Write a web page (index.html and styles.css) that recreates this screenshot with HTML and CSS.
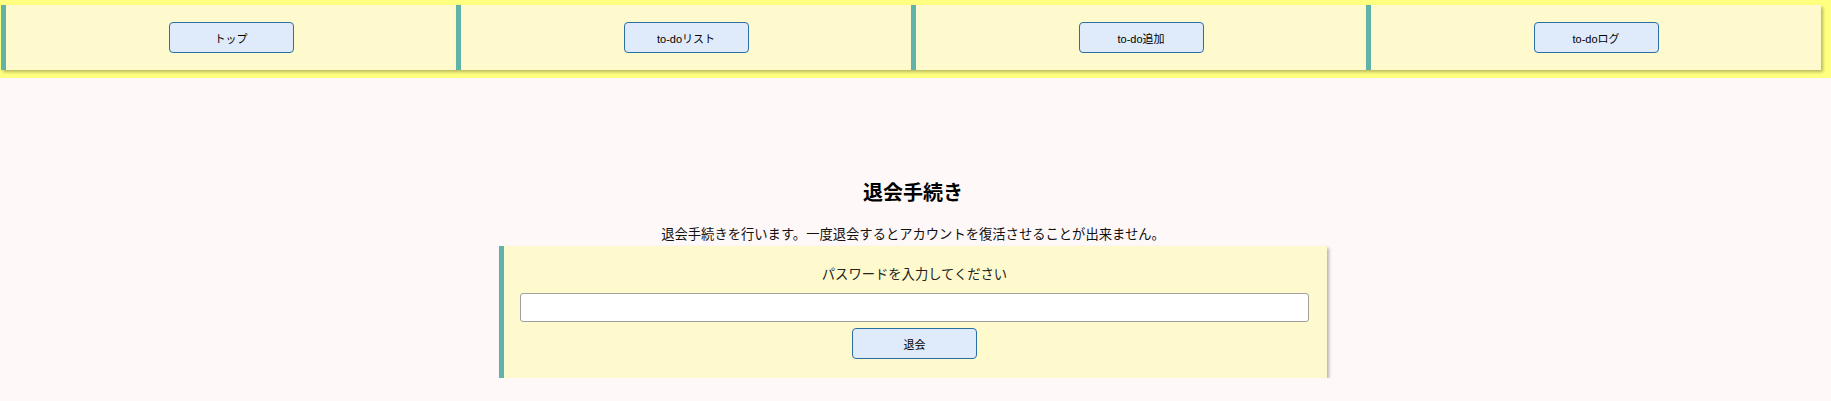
FILE: index.html
```html
<!DOCTYPE html>
<html lang="ja">
<head>
<meta charset="utf-8">
<title>退会手続き</title>
<link rel="stylesheet" href="styles.css">
</head>
<body>
<header class="site-header">
  <nav class="nav">
    <div class="nav-card"><button class="btn">トップ</button></div>
    <div class="nav-card"><button class="btn">to-doリスト</button></div>
    <div class="nav-card"><button class="btn">to-do追加</button></div>
    <div class="nav-card"><button class="btn">to-doログ</button></div>
  </nav>
</header>
<main class="main">
  <h2 class="title">退会手続き</h2>
  <p class="desc">退会手続きを行います。一度退会するとアカウントを復活させることが出来ません。</p>
  <form class="form-card">
    <p class="label">パスワードを入力してください</p>
    <input class="input" type="password">
    <button class="btn" type="button">退会</button>
  </form>
</main>
</body>
</html>
```
FILE: styles.css
```css
* { box-sizing: border-box; }
html, body {
  margin: 0;
  background: #fff8f8;
  font-family: "Liberation Sans", "Noto Sans CJK JP", sans-serif;
  color: #111;
}
.site-header {
  background: #ffff80;
  padding: 5px 10px 8px 1px;
}
.nav {
  display: grid;
  grid-template-columns: repeat(4, 1fr);
}
.nav-card {
  height: 65px;
  background: #fffacd;
  border-left: 5px solid #5fb3a8;
  box-shadow: 2px 2px 3px rgba(0, 0, 0, 0.28);
  display: flex;
  align-items: center;
  justify-content: center;
}
.btn {
  width: 125px;
  height: 31px;
  background: #dfebfa;
  border: 1px solid #2a6ea6;
  border-radius: 4px;
  font-family: "Liberation Sans", "Noto Sans CJK JP", sans-serif;
  font-size: 11px;
  color: #000;
  padding: 0;
}
.main {
  padding: 0 5px 0 0;
  display: flex;
  flex-direction: column;
  align-items: center;
}
.title {
  font-size: 20px;
  font-weight: bold;
  line-height: 30px;
  margin: 100px 0 0;
  color: #000;
}
.desc {
  font-size: 13.3px;
  line-height: 20px;
  margin: 17px 0 1px;
}
.form-card {
  width: 828px;
  background: #fffacd;
  border-left: 5px solid #5fb3a8;
  box-shadow: 2px 2px 3px rgba(0, 0, 0, 0.28);
  padding: 19px 18px 19px 16px;
  display: flex;
  flex-direction: column;
  align-items: center;
}
.label {
  font-size: 13.3px;
  line-height: 20px;
  margin: 0 0 8px;
  color: #222;
}
.input {
  width: 100%;
  height: 29px;
  border: 1px solid #a0a0a0;
  border-radius: 3px;
  background: #fff;
  margin: 0 0 6px;
}
```
